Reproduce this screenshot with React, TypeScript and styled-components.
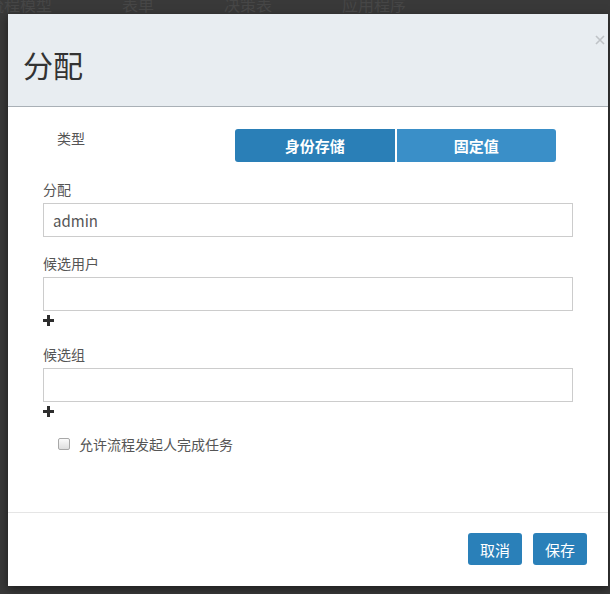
import React from "react";
import styled, { createGlobalStyle } from "styled-components";

const GlobalStyle = createGlobalStyle`
  html, body {
    margin: 0;
    padding: 0;
    background: #383838;
    font-family: "Noto Sans CJK SC", "Noto Sans", sans-serif;
  }
`;

const Page = styled.div`
  width: 610px;
  height: 594px;
  overflow: hidden;
  background: #393939;
`;

const NavStrip = styled.div`
  height: 14px;
  overflow: hidden;
  display: flex;
  gap: 70px;
  margin-left: -12px;
`;

const NavItem = styled.span`
  font-size: 16px;
  line-height: 16px;
  margin-top: -4px;
  color: #464646;
  white-space: nowrap;
`;

const Modal = styled.div`
  width: 600px;
  height: 572px;
  margin-left: 8px;
  background: #fff;
  display: flex;
  flex-direction: column;
  box-shadow: 0 3px 9px rgba(0, 0, 0, 0.5);
`;

const Header = styled.div`
  position: relative;
  height: 92px;
  background: #e8edf1;
  border-bottom: 1px solid #a9b0b6;
  box-sizing: content-box;
  padding-left: 15px;
`;

const Title = styled.h4`
  margin: 0;
  padding-top: 34px;
  font-size: 30px;
  line-height: 33px;
  font-weight: 400;
  color: #333;
`;

const CloseButton = styled.button`
  position: absolute;
  top: 19px;
  right: 1px;
  width: 14px;
  height: 14px;
  padding: 0;
  border: none;
  background: transparent;
  display: flex;
  align-items: center;
  justify-content: center;
`;

const Body = styled.div`
  flex: 1;
  padding: 22px 35px 0 35px;
`;

const TypeRow = styled.div`
  display: grid;
  grid-template-columns: 192px 321px;
  height: 33px;
`;

const TypeLabel = styled.span`
  padding-left: 14px;
  font-size: 14px;
  line-height: 18px;
  color: #555;
`;

const ButtonGroup = styled.div`
  display: flex;
  gap: 2px;
`;

const ToggleButton = styled.button<{ $active?: boolean; $first?: boolean }>`
  flex: 1;
  height: 33px;
  border: none;
  padding: 0;
  color: #fff;
  font-family: inherit;
  font-size: 15px;
  font-weight: 700;
  background: ${(p) => (p.$active ? "#2a7fb7" : "#3a8fc8")};
  border-radius: ${(p) => (p.$first ? "3px 0 0 3px" : "0 3px 3px 0")};
`;

const Field = styled.div<{ $gap: number }>`
  margin-top: ${(p) => p.$gap}px;
  display: flex;
  flex-direction: column;
`;

const FieldLabel = styled.label`
  font-size: 14px;
  line-height: 18px;
  color: #555;
  margin-bottom: 5px;
`;

const TextInput = styled.input`
  box-sizing: border-box;
  width: 530px;
  height: 34px;
  border: 1px solid #ccc;
  padding: 0 9px;
  font-family: inherit;
  font-size: 15px;
  color: #555;
  outline: none;
`;

const AddRow = styled.div`
  height: 18px;
  display: flex;
  align-items: center;
`;

const CheckRow = styled.label`
  margin-top: 14px;
  height: 20px;
  display: flex;
  align-items: center;
  padding-left: 15px;
  gap: 9px;
  font-size: 14px;
  color: #555;
`;

const CheckBox = styled.span`
  box-sizing: border-box;
  width: 12px;
  height: 12px;
  border: 1px solid #a8a8a8;
  border-radius: 2px;
  background: linear-gradient(#fbfbfb, #dedede);
`;

const Footer = styled.div`
  height: 74px;
  border-top: 1px solid #e5e5e5;
  display: flex;
  justify-content: flex-end;
  align-items: flex-start;
  gap: 11px;
  padding: 20px 21px 0 0;
  box-sizing: border-box;
`;

const FooterButton = styled.button`
  width: 54px;
  height: 32px;
  border: none;
  border-radius: 3px;
  background: #2a80b9;
  color: #fff;
  font-family: inherit;
  font-size: 15px;
  padding: 0;
`;

const PlusIcon = () => (
  <svg width="11" height="11" viewBox="0 0 11 11">
    <path d="M5.5 0v11M0 5.5h11" stroke="#2d2d2d" strokeWidth="3" />
  </svg>
);

const CloseIcon = () => (
  <svg width="10" height="10" viewBox="0 0 10 10">
    <path d="M1 1l8 8M9 1l-8 8" stroke="#bfc3c7" strokeWidth="1.6" />
  </svg>
);

export default function App() {
  return (
    <>
      <GlobalStyle />
      <Page>
        <NavStrip>
          <NavItem>流程模型</NavItem>
          <NavItem>表单</NavItem>
          <NavItem>决策表</NavItem>
          <NavItem>应用程序</NavItem>
        </NavStrip>
        <Modal>
          <Header>
            <Title>分配</Title>
            <CloseButton aria-label="close">
              <CloseIcon />
            </CloseButton>
          </Header>
          <Body>
            <TypeRow>
              <TypeLabel>类型</TypeLabel>
              <ButtonGroup>
                <ToggleButton $active $first>
                  身份存储
                </ToggleButton>
                <ToggleButton>固定值</ToggleButton>
              </ButtonGroup>
            </TypeRow>
            <Field $gap={18}>
              <FieldLabel>分配</FieldLabel>
              <TextInput defaultValue="admin" />
            </Field>
            <Field $gap={17}>
              <FieldLabel>候选用户</FieldLabel>
              <TextInput />
            </Field>
            <AddRow>
              <PlusIcon />
            </AddRow>
            <Field $gap={16}>
              <FieldLabel>候选组</FieldLabel>
              <TextInput />
            </Field>
            <AddRow>
              <PlusIcon />
            </AddRow>
            <CheckRow>
              <CheckBox />
              允许流程发起人完成任务
            </CheckRow>
          </Body>
          <Footer>
            <FooterButton>取消</FooterButton>
            <FooterButton>保存</FooterButton>
          </Footer>
        </Modal>
      </Page>
    </>
  );
}
